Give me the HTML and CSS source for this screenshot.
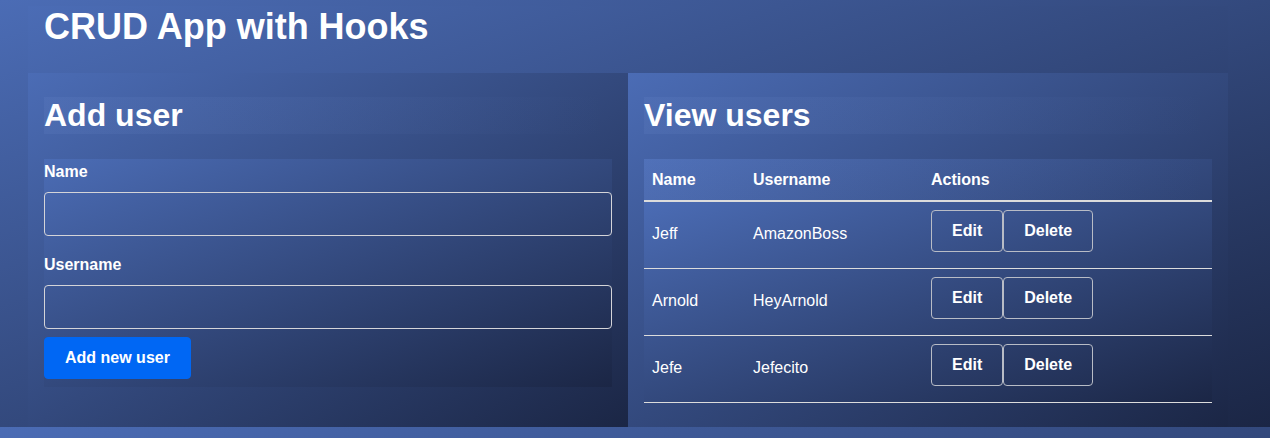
FILE: index.html
```html
<!DOCTYPE html>
<html lang="en">
<head>
<meta charset="utf-8">
<title>CRUD App with Hooks</title>
<link rel="stylesheet" href="styles.css">
</head>
<body>
<div class="page">
  <div class="container">
    <h1 class="title">CRUD App with Hooks</h1>
    <div class="flex-row">
      <div class="panel">
        <h2 class="panel-title">Add user</h2>
        <form class="user-form">
          <label class="field-label first">Name</label>
          <input class="field-input first" type="text" name="name">
          <label class="field-label">Username</label>
          <input class="field-input" type="text" name="username">
          <button class="btn btn-primary" type="button">Add new user</button>
        </form>
      </div>
      <div class="panel">
        <h2 class="panel-title">View users</h2>
        <table class="users">
          <thead class="head">
            <tr>
              <th class="col-name">Name</th>
              <th class="col-user">Username</th>
              <th class="col-actions">Actions</th>
            </tr>
          </thead>
          <tbody class="grad">
            <tr>
              <td>Jeff</td>
              <td>AmazonBoss</td>
              <td><div class="actions"><button class="btn" type="button">Edit</button><button class="btn" type="button">Delete</button></div></td>
            </tr>
            <tr>
              <td>Arnold</td>
              <td>HeyArnold</td>
              <td><div class="actions"><button class="btn" type="button">Edit</button><button class="btn" type="button">Delete</button></div></td>
            </tr>
            <tr>
              <td>Jefe</td>
              <td>Jefecito</td>
              <td><div class="actions"><button class="btn" type="button">Edit</button><button class="btn" type="button">Delete</button></div></td>
            </tr>
          </tbody>
        </table>
      </div>
    </div>
  </div>
</div>
</body>
</html>
```
FILE: styles.css
```css
body {
  margin: 0;
  font-family: "Liberation Sans", Arial, sans-serif;
  color: #fff;
  background: linear-gradient(to bottom right, #4b6cb5, #1b2645);
}

.page {
  padding-top: 6px;
}

.container,
.panel,
.user-form,
.users,
.grad {
  background: linear-gradient(to bottom right, #4b6cb5, #1b2645);
}

.panel-title,
.head {
  background: linear-gradient(to right, rgba(120, 150, 215, 0.12), rgba(120, 150, 215, 0));
}

.container {
  width: 1200px;
  margin-left: 28px;
}

.title {
  margin: 0 0 25px;
  padding-left: 16px;
  font-size: 36px;
  line-height: 42px;
  font-weight: bold;
}

.flex-row {
  display: flex;
}

.panel {
  flex: 1 1 0;
  padding: 24px 16px 24px;
}

.panel-title {
  margin: 0 0 25px;
  font-size: 32px;
  line-height: 37px;
  font-weight: bold;
}

.user-form {
  display: flex;
  flex-direction: column;
  align-items: flex-start;
  padding: 3px 0 8px;
}

.field-label {
  display: block;
  font-size: 16px;
  line-height: 19px;
  font-weight: bold;
  margin-bottom: 11px;
}

.field-input {
  box-sizing: border-box;
  width: 100%;
  height: 44px;
  margin: 0 0 8px;
  padding: 0 12px;
  border: 1px solid #d4d4d8;
  border-radius: 4px;
  background: transparent;
  color: #fff;
  font: 16px "Liberation Sans", Arial, sans-serif;
}

.field-input.first {
  margin-bottom: 19px;
}

.btn {
  box-sizing: border-box;
  height: 42px;
  padding: 0 20px;
  border: 1px solid #b8bcc6;
  border-radius: 4px;
  background: transparent;
  color: #fff;
  font: bold 16px/18px "Liberation Sans", Arial, sans-serif;
  margin: 0 0 6px;
}

.btn-primary {
  background: #0067f4;
  border-color: #0067f4;
  padding: 0 20px;
  margin: 0;
}

.users {
  width: 100%;
  border-collapse: collapse;
  font-size: 16px;
}

.users th {
  text-align: left;
  font-weight: bold;
  line-height: 18px;
  padding: 12px 8px 11px;
  border-bottom: 2px solid #dcdcdc;
}

.col-name { width: 85px; }
.col-user { width: 162px; }

.users td {
  line-height: 18px;
  padding: 8px 8px 10px;
  border-bottom: 1px solid #dcdcdc;
  vertical-align: middle;
}

.actions {
  display: flex;
}
```
